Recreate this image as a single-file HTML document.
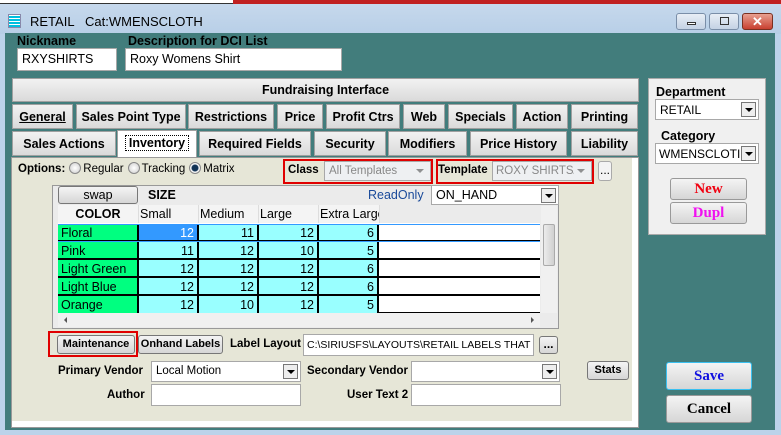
<!DOCTYPE html>
<html><head><meta charset="utf-8"><style>
*{box-sizing:border-box;margin:0;padding:0}
body{width:781px;height:435px;overflow:hidden;position:relative;background:#bcd3ea;font-family:"Liberation Sans",Arial,sans-serif;font-size:12px;color:#000}
.a{position:absolute}
.b{font-weight:bold}
.l{font-weight:bold;font-size:11.5px;white-space:nowrap}
.inp{position:absolute;background:#fff;border:1px solid #a8a8a8;padding:3px 4px;white-space:nowrap;overflow:hidden;font-size:12px}
.tab{position:absolute;height:25px;background:linear-gradient(#f2f2f2,#dadada);border:1px solid #a0a0a0;font-weight:bold;font-size:12.5px;text-align:center;line-height:24px;white-space:nowrap}
.btn{position:absolute;background:linear-gradient(#f4f4f4,#d6d6d6);border:1px solid #777;border-radius:3px;text-align:center;font-weight:bold;white-space:nowrap}
.dd{position:absolute;width:15px;height:15px;border:1px solid #777;background:#eee;top:2px;right:2px}
.dd:after{content:"";position:absolute;left:3px;top:5px;border-left:4px solid transparent;border-right:4px solid transparent;border-top:4px solid #000}
.cell{position:absolute;height:18px;background:#99ffff;border-right:2px solid #000;border-bottom:2px solid #000;text-align:right;padding-right:3px;padding-top:1px;font-size:12.5px;line-height:17px}
.cc{position:absolute;height:18px;background:#00ff80;border-right:2px solid #000;border-bottom:2px solid #000;padding-left:3px;padding-top:1px;font-size:12.5px;line-height:17px}
.hd{position:absolute;top:205px;height:18px;background:#f4f4f4;font-size:12.5px;line-height:18px;border-right:1px solid #ddd;white-space:nowrap;overflow:hidden}
.rb{display:inline-block;width:12px;height:12px;border-radius:50%;border:1px solid #888;background:radial-gradient(#fff,#ccc);vertical-align:-2px;margin:0 2px 0 4px}
</style></head><body>
<div class="a" style="left:0;top:0;width:781px;height:4px;background:#fff;border-bottom:1px solid #333"></div>
<div class="a" style="left:233px;top:0;width:548px;height:4px;background:#c02020"></div>
<div class="a" style="left:0;top:4px;width:781px;height:30px;background:linear-gradient(#c6d8ec,#b8cfe7)"></div>
<div class="a" style="left:8px;top:14px;width:13px;height:14px;background:repeating-linear-gradient(#fff 0 1px,#00c0e0 1px 3px);border:1px solid #88a"></div>
<div class="a" style="left:30px;top:14px;font-size:13px">RETAIL</div>
<div class="a" style="left:85px;top:14px;font-size:13px">Cat:WMENSCLOTH</div>
<div class="a" style="left:676px;top:13px;width:30px;height:17px;border:1px solid #7a8ea8;border-radius:3px;background:linear-gradient(#e8eef6,#c4d2e4)"><div class="a" style="left:10px;top:8px;width:9px;height:3px;border:1px solid #333;background:#fff"></div></div>
<div class="a" style="left:709px;top:13px;width:30px;height:17px;border:1px solid #7a8ea8;border-radius:3px;background:linear-gradient(#e8eef6,#c4d2e4)"><div class="a" style="left:10px;top:3px;width:9px;height:8px;border:1px solid #333"></div></div>
<div class="a" style="left:742px;top:13px;width:31px;height:17px;border:1px solid #7a3020;border-radius:3px;background:linear-gradient(#e8a090,#c84030);color:#fff;font-weight:bold;text-align:center;line-height:15px;font-size:13px">✕</div>
<div class="a" style="left:5px;top:33px;width:770px;height:397px;background:#427d7c"></div>
<div class="a b" style="left:17px;top:34px;font-size:12.5px">Nickname</div>
<div class="inp" style="left:17px;top:48px;width:100px;height:23px;font-size:12.5px">RXYSHIRTS</div>
<div class="a b" style="left:128px;top:34px;font-size:12.5px">Description for DCI List</div>
<div class="inp" style="left:125px;top:48px;width:217px;height:23px;font-size:12.5px">Roxy Womens Shirt</div>
<div class="tab" style="left:12px;top:78px;width:627px;height:24px;line-height:23px">Fundraising Interface</div>
<div class="tab" style="left:12px;top:104px;width:61px"><u>General</u></div>
<div class="tab" style="left:76px;top:104px;width:110px">Sales Point Type</div>
<div class="tab" style="left:188px;top:104px;width:86px">Restrictions</div>
<div class="tab" style="left:277px;top:104px;width:46px">Price</div>
<div class="tab" style="left:326px;top:104px;width:74px">Profit Ctrs</div>
<div class="tab" style="left:403px;top:104px;width:42px">Web</div>
<div class="tab" style="left:448px;top:104px;width:65px">Specials</div>
<div class="tab" style="left:516px;top:104px;width:52px">Action</div>
<div class="tab" style="left:571px;top:104px;width:67px">Printing</div>
<div class="tab" style="left:12px;top:131px;width:104px">Sales Actions</div>
<div class="tab" style="left:117px;top:130px;width:80px;height:28px;background:#fff;border-bottom:none"><span style="outline:1px dotted #000;padding:0 3px">Inventory</span></div>
<div class="tab" style="left:199px;top:131px;width:112px">Required Fields</div>
<div class="tab" style="left:314px;top:131px;width:72px">Security</div>
<div class="tab" style="left:388px;top:131px;width:79px">Modifiers</div>
<div class="tab" style="left:470px;top:131px;width:97px">Price History</div>
<div class="tab" style="left:571px;top:131px;width:67px">Liability</div>
<div class="a" style="left:11px;top:157px;width:628px;height:271px;background:#fff;border:1px solid #999"></div>
<div class="a" style="left:12px;top:158px;width:620px;height:263px;background:#e6e6d7"></div>
<div class="a" style="left:18px;top:162px;font-size:11.5px;white-space:nowrap"><b>Options:</b><span class="rb"></span>Regular<span class="rb"></span>Tracking<span class="rb" style="background:radial-gradient(#135 0 3px,#fff 4px,#ccc)"></span>Matrix</div>
<div class="a" style="left:283px;top:159px;width:150px;height:25px;border:2px solid #e00000"></div>
<div class="a l" style="left:288px;top:164px">Class</div>
<div class="inp" style="left:324px;top:161px;width:107px;height:20px;color:#888;background:#eef0f2;padding:3px 4px;font-size:11.5px">All Templates<div class="dd" style="border:none;background:none;opacity:.4"></div></div>
<div class="a" style="left:436px;top:159px;width:158px;height:25px;border:2px solid #e00000"></div>
<div class="a l" style="left:438px;top:164px">Template</div>
<div class="inp" style="left:492px;top:161px;width:100px;height:20px;color:#888;background:#eef0f2;padding:3px 3px;font-size:11.5px"><span style="display:inline-block;width:78px;overflow:hidden">ROXY SHIRTS/T</span><div class="dd" style="border:none;background:none;opacity:.4"></div></div>
<div class="btn" style="left:598px;top:161px;width:14px;height:20px;font-weight:normal;line-height:16px;border-color:#aaa;background:#f4f4f4">...</div>
<div class="a" style="left:52px;top:185px;width:507px;height:144px;background:#fff;border:1px solid #999"></div>
<div class="a" style="left:53px;top:186px;width:505px;height:142px;background:#ebebeb"></div>
<div class="btn" style="left:58px;top:186px;width:80px;height:18px;font-weight:normal;font-size:12.5px;line-height:16px">swap</div>
<div class="a b" style="left:148px;top:188px;font-size:12.5px">SIZE</div>
<div class="a" style="left:368px;top:188px;color:#1a4a9a;font-size:12.5px">ReadOnly</div>
<div class="inp" style="left:431px;top:185px;width:128px;height:20px;padding:2px 4px;font-size:12.5px">ON_HAND<div class="dd"></div></div>
<div class="hd b" style="left:58px;width:81px;text-align:center">COLOR</div>
<div class="hd" style="left:139px;width:60px;padding-left:1px">Small</div>
<div class="hd" style="left:199px;width:60px;padding-left:1px">Medium</div>
<div class="hd" style="left:259px;width:60px;padding-left:1px">Large</div>
<div class="hd" style="left:319px;width:61px;padding-left:1px">Extra Large</div>
<div class="a" style="left:58px;top:223px;width:482px;height:91px;background:#fff"></div>
<div class="a" style="left:379px;top:224px;width:161px;height:90px;background:repeating-linear-gradient(#fff 0 16px,#000 16px 18px)"></div>
<div class="cc" style="left:58px;top:224px;width:81px">Floral</div><div class="cell" style="left:139px;top:224px;width:60px;background:#3399ff;color:#fff">12</div><div class="cell" style="left:199px;top:224px;width:60px">11</div><div class="cell" style="left:259px;top:224px;width:60px">12</div><div class="cell" style="left:319px;top:224px;width:60px">6</div>
<div class="cc" style="left:58px;top:242px;width:81px">Pink</div><div class="cell" style="left:139px;top:242px;width:60px">11</div><div class="cell" style="left:199px;top:242px;width:60px">12</div><div class="cell" style="left:259px;top:242px;width:60px">10</div><div class="cell" style="left:319px;top:242px;width:60px">5</div>
<div class="cc" style="left:58px;top:260px;width:81px">Light Green</div><div class="cell" style="left:139px;top:260px;width:60px">12</div><div class="cell" style="left:199px;top:260px;width:60px">12</div><div class="cell" style="left:259px;top:260px;width:60px">12</div><div class="cell" style="left:319px;top:260px;width:60px">6</div>
<div class="cc" style="left:58px;top:278px;width:81px">Light Blue</div><div class="cell" style="left:139px;top:278px;width:60px">12</div><div class="cell" style="left:199px;top:278px;width:60px">12</div><div class="cell" style="left:259px;top:278px;width:60px">12</div><div class="cell" style="left:319px;top:278px;width:60px">6</div>
<div class="cc" style="left:58px;top:296px;width:81px;height:17px;border-bottom:none">Orange</div><div class="cell" style="left:139px;top:296px;width:60px;height:17px;border-bottom:none">12</div><div class="cell" style="left:199px;top:296px;width:60px;height:17px;border-bottom:none">10</div><div class="cell" style="left:259px;top:296px;width:60px;height:17px;border-bottom:none">12</div><div class="cell" style="left:319px;top:296px;width:60px;height:17px;border-bottom:none">5</div>
<div class="a" style="left:58px;top:224px;width:482px;height:18px;border:1px solid #3399ff;border-left:none;border-right:none;pointer-events:none"></div>
<div class="a" style="left:541px;top:206px;width:16px;height:107px;background:#f0f0f0"></div>
<div class="a" style="left:543px;top:224px;width:12px;height:42px;background:linear-gradient(90deg,#ececec,#d0d0d0);border:1px solid #aaa;border-radius:2px"></div>
<div class="a" style="left:58px;top:313px;width:482px;height:14px;background:#f0f0f0"></div>
<div class="a" style="left:64px;top:317px;border-top:3px solid transparent;border-bottom:3px solid transparent;border-right:3px solid #555"></div>
<div class="a" style="left:531px;top:317px;border-top:3px solid transparent;border-bottom:3px solid transparent;border-left:3px solid #555"></div>
<div class="a" style="left:48px;top:331px;width:90px;height:26px;border:2px solid #e00000"></div>
<div class="btn" style="left:57px;top:335px;width:78px;height:19px;line-height:17px;font-size:11px">Maintenance</div>
<div class="btn" style="left:138px;top:335px;width:85px;height:19px;line-height:17px;font-size:11px">Onhand Labels</div>
<div class="a l" style="left:230px;top:338px">Label Layout</div>
<div class="inp" style="left:303px;top:334px;width:231px;height:22px;font-size:10.5px;padding:4px 3px">C:\SIRIUSFS\LAYOUTS\RETAIL LABELS THAT</div>
<div class="btn" style="left:539px;top:336px;width:19px;height:18px;line-height:14px">...</div>
<div class="a l" style="left:58px;top:365px">Primary Vendor</div>
<div class="inp" style="left:151px;top:361px;width:150px;height:21px;padding:3px 4px;font-size:11.5px">Local Motion<div class="dd"></div></div>
<div class="a l" style="left:307px;top:365px">Secondary Vendor</div>
<div class="inp" style="left:411px;top:361px;width:149px;height:21px"><div class="dd"></div></div>
<div class="btn" style="left:587px;top:361px;width:42px;height:19px;line-height:17px;font-size:11px">Stats</div>
<div class="a l" style="left:107px;top:389px">Author</div>
<div class="inp" style="left:151px;top:384px;width:150px;height:22px"></div>
<div class="a l" style="left:347px;top:389px">User Text 2</div>
<div class="inp" style="left:411px;top:384px;width:150px;height:22px"></div>
<div class="a" style="left:648px;top:78px;width:118px;height:157px;background:#f0f0f0;border:1px solid #aaa"></div>
<div class="a b" style="left:656px;top:85px;font-size:12.5px">Department</div>
<div class="inp" style="left:655px;top:99px;width:104px;height:21px;padding:3px 4px">RETAIL<div class="dd"></div></div>
<div class="a b" style="left:661px;top:129px;font-size:12.5px">Category</div>
<div class="inp" style="left:655px;top:143px;width:104px;height:21px;padding:3px 3px">WMENSCLOTI<div class="dd"></div></div>
<div class="btn" style="left:670px;top:178px;width:77px;height:22px;font-family:'Liberation Serif',serif;color:#f00010;font-size:15px;line-height:20px;border-color:#999">New</div>
<div class="btn" style="left:670px;top:202px;width:77px;height:22px;font-family:'Liberation Serif',serif;color:#f010f0;font-size:15px;line-height:20px;border-color:#999">Dupl</div>
<div class="btn" style="left:666px;top:362px;width:86px;height:28px;font-family:'Liberation Serif',serif;color:#1010e0;font-size:15px;line-height:26px;border-color:#3ac0f0">Save</div>
<div class="btn" style="left:666px;top:395px;width:86px;height:28px;font-family:'Liberation Serif',serif;font-size:15px;line-height:26px;border-color:#999">Cancel</div>
</body></html>
